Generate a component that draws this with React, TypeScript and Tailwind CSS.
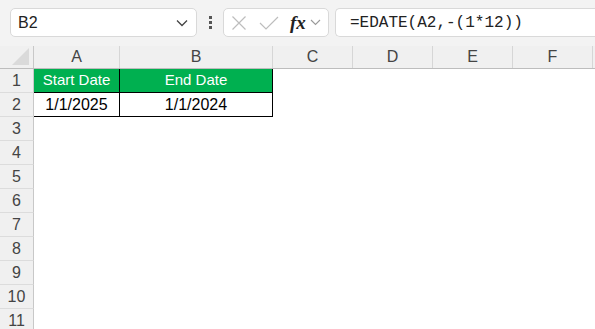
import React from "react";

const cols = ["A", "B", "C", "D", "E", "F"];
const widths = [86, 153, 80, 80, 80, 80];

export default function App() {
  const rows = Array.from({ length: 11 }, (_, i) => i + 1);
  return (
    <div className="w-[595px] h-[329px] overflow-hidden bg-white relative" style={{ fontFamily: '"Liberation Sans", Arial, sans-serif' }}>
      {/* Toolbar */}
      <div className="h-[46px] bg-[#f3f3f3] flex items-start pt-[8px]">
        <div className="ml-[10px] w-[187px] h-[29px] rounded-[5px] border border-[#d9d9d9] bg-white flex items-center justify-between pl-[7px] pr-[8px]">
          <span className="text-[16px] text-[#222]">B2</span>
          <svg width="12" height="8" viewBox="0 0 12 8"><path d="M1 1.5 L6 6.5 L11 1.5" fill="none" stroke="#444" strokeWidth="1.3" /></svg>
        </div>
        <div className="w-[26px] h-[29px] flex flex-col items-center justify-center gap-[2px]">
          <div className="w-[3px] h-[3px] bg-[#555]" />
          <div className="w-[3px] h-[3px] bg-[#555]" />
          <div className="w-[3px] h-[3px] bg-[#555]" />
        </div>
        <div className="w-[106px] h-[29px] rounded-[5px] border border-[#d9d9d9] bg-white flex items-center pl-[7px]">
          <svg width="16" height="16" viewBox="0 0 16 16" className="mr-[12px]"><path d="M1.5 1.5 L14.5 14.5 M14.5 1.5 L1.5 14.5" stroke="#bdbdbd" strokeWidth="1.2" fill="none" /></svg>
          <svg width="20" height="14" viewBox="0 0 20 14" className="mr-[11px]"><path d="M1 7 L7 13 L19 1" stroke="#bdbdbd" strokeWidth="1.2" fill="none" /></svg>
          <span className="text-[19px] italic font-bold text-[#222] leading-none mr-[4px]" style={{ fontFamily: '"Liberation Serif", serif' }}>fx</span>
          <svg width="11" height="7" viewBox="0 0 11 7"><path d="M1 1 L5.5 5.5 L10 1" fill="none" stroke="#9a9a9a" strokeWidth="1.1" /></svg>
        </div>
        <div className="ml-[6px] flex-1 h-[29px] rounded-l-[5px] border border-r-0 border-[#d9d9d9] bg-white flex items-center pl-[14px]">
          <span className="text-[16px] text-[#222]" style={{ fontFamily: '"Liberation Mono", "DejaVu Sans Mono", monospace' }}>=EDATE(A2,-(1*12))</span>
        </div>
      </div>

      {/* Column header row */}
      <div className="flex h-[23px] bg-[#f0f0f0] border-b border-[#bdbdbd]">
        <div className="w-[34px] border-r border-[#c8c8c8] relative">
          <svg width="18" height="17" viewBox="0 0 18 17" className="absolute right-[3px] bottom-[3px]"><path d="M17 0 L17 17 L0 17 Z" fill="#dadada" /></svg>
        </div>
        {cols.map((c, i) => (
          <div key={c} className="border-r border-[#d6d6d6] flex items-center justify-center text-[16px] text-[#444]" style={{ width: widths[i] }}>
            {c}
          </div>
        ))}
        <div className="flex-1" />
      </div>

      {/* Rows */}
      {rows.map((r) => (
        <div key={r} className="flex h-[24px]">
          <div className="w-[34px] shrink-0 bg-[#f0f0f0] border-r border-[#c8c8c8] border-b border-b-[#dcdcdc] flex items-center justify-center text-[16px] text-[#444]">
            {r}
          </div>
          {r === 1 && (
            <>
              <div className="w-[86px] bg-[#00b050] border-r border-b border-black flex items-center justify-center text-[15px] text-white">Start Date</div>
              <div className="w-[153px] bg-[#00b050] border-r border-b border-black flex items-center justify-center text-[15px] text-white">End Date</div>
            </>
          )}
          {r === 2 && (
            <>
              <div className="w-[86px] bg-white border-r border-b border-black flex items-center justify-center text-[16px] text-black">1/1/2025</div>
              <div className="w-[153px] bg-white border-r border-b border-black flex items-center justify-center text-[16px] text-black">1/1/2024</div>
            </>
          )}
          <div className="flex-1 bg-white" />
        </div>
      ))}
    </div>
  );
}
